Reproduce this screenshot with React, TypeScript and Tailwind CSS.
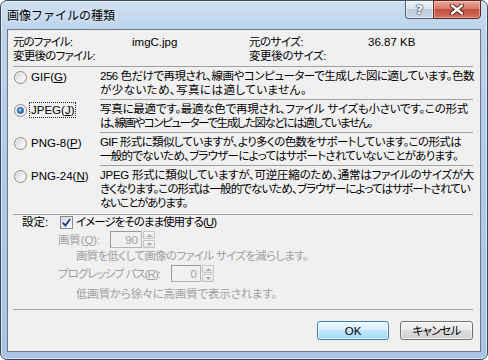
import React, { useLayoutEffect, useRef, useState } from "react";

const F = "font-['Liberation_Sans','Noto_Sans_CJK_JP',sans-serif]";

function Fit({ w, children, className = "" }: { w: number; children: React.ReactNode; className?: string }) {
  const ref = useRef<HTMLSpanElement>(null);
  const [ls, setLs] = useState<number | null>(null);
  useLayoutEffect(() => {
    const measure = () => {
      const el = ref.current;
      if (!el) return;
      const n = (el.textContent || "").length || 1;
      const cur = parseFloat(getComputedStyle(el).letterSpacing) || 0;
      const natural = el.getBoundingClientRect().width - n * cur;
      const next = Math.round(((w - natural) / n) * 1000) / 1000;
      setLs(next);
    };
    measure();
    if (document.fonts && document.fonts.ready) {
      document.fonts.ready.then(measure);
    }
  }, [w]);
  return (
    <span
      ref={ref}
      className={"inline-block whitespace-nowrap " + className}
      style={ls !== null ? { letterSpacing: `${ls}px` } : undefined}
    >
      {children}
    </span>
  );
}

function Radio({ checked }: { checked?: boolean }) {
  return (
    <span className="w-[13px] h-[13px] rounded-full border border-[#8b8b8b] bg-gradient-to-br from-[#cfcfcf] via-[#ececec] to-[#ffffff] flex items-center justify-center shrink-0 shadow-[inset_0_0_0_1px_#f4f4f4]">
      {checked && (
        <span className="w-[7px] h-[7px] rounded-full bg-[radial-gradient(circle_at_40%_35%,#bfe6ff_0%,#3f8fd8_45%,#0d4a95_100%)] border border-[#1b4f8a]" />
      )}
    </span>
  );
}

function Spinner() {
  return (
    <div className="flex flex-col w-[12px] h-[17px] gap-px">
      <div className="flex-1 border border-[#c4c4c4] rounded-[1px] bg-gradient-to-b from-[#f6f6f6] to-[#e4e4e4] flex items-center justify-center">
        <svg width="5" height="3" viewBox="0 0 5 3"><path d="M0 3 L2.5 0 L5 3 Z" fill="#a8a8a8" /></svg>
      </div>
      <div className="flex-1 border border-[#c4c4c4] rounded-[1px] bg-gradient-to-b from-[#f6f6f6] to-[#e4e4e4] flex items-center justify-center">
        <svg width="5" height="3" viewBox="0 0 5 3"><path d="M0 0 L2.5 3 L5 0 Z" fill="#a8a8a8" /></svg>
      </div>
    </div>
  );
}

function Option({
  label,
  lines,
  checked,
  focus,
  last,
}: {
  label: React.ReactNode;
  lines: [string, number][];
  checked?: boolean;
  focus?: boolean;
  last?: boolean;
}) {
  return (
    <div className="flex">
      <div className="w-[87px] shrink-0 pt-[2px] flex items-start">
        <div className="flex items-center h-[16px] gap-[3px] pl-[1px]">
          <Radio checked={checked} />
          <span
            className={
              "leading-[14px] whitespace-nowrap " +
              (focus ? "border border-dotted border-[#222] px-px -ml-px" : "px-px")
            }
          >
            {label}
          </span>
        </div>
      </div>
      <div
        className={
          "flex-1 min-w-0 pt-[2px] pb-[2px] " + (last ? "" : "border-b border-[#a0a0a0]")
        }
      >
        {lines.map(([t, w], i) => (
          <div key={i} className="leading-[14px] h-[14px] whitespace-nowrap">
            <Fit w={w}>{t}</Fit>
          </div>
        ))}
      </div>
    </div>
  );
}

export default function App() {
  return (
    <div className={"w-[488px] h-[360px] bg-white text-[11.5px] text-black " + F}>
      <div className="w-[488px] h-[360px] rounded-[7px] border border-[#3b4859] bg-[linear-gradient(180deg,#cfe0f2_0%,#bcd3ec_8%,#b2cbe7_40%,#a9c4e3_100%)] flex flex-col shadow-[inset_0_0_0_1px_rgba(255,255,255,0.55)]">
        {/* title bar */}
        <div className="h-[28px] flex justify-between">
          <div className="pl-[6px] pt-[7px] leading-[14px] text-[12px] text-black whitespace-nowrap font-['Noto_Sans_CJK_JP',sans-serif] [text-shadow:0_0_6px_rgba(255,255,255,0.9)]">
            画像ファイルの種類
          </div>
          <div className="flex mr-[6px] -mt-px h-[19px]">
            <div className="w-[28px] h-full border border-[#4f5d6e] border-r-0 rounded-bl-[4px] bg-[linear-gradient(180deg,#eef3f9_0%,#d9e3ef_45%,#bccadb_50%,#c9d6e6_100%)] flex items-center justify-center shadow-[inset_0_0_0_1px_rgba(255,255,255,0.6)]">
              <span className="font-['DejaVu_Sans',sans-serif] font-bold text-[13px] leading-[13px] text-white [text-shadow:0_0_1px_#2c3a4a,0_0_1px_#2c3a4a,0_0_2px_#2c3a4a]">
                ?
              </span>
            </div>
            <div className="w-[48px] h-full border border-[#5b2520] rounded-br-[4px] bg-[linear-gradient(180deg,#e9a99b_0%,#d9786a_45%,#c44f3e_50%,#d0705a_100%)] flex items-center justify-center shadow-[inset_0_0_0_1px_rgba(255,220,210,0.5)]">
              <svg width="16" height="11" viewBox="0 0 16 11">
                <path d="M3 1.5 L13 9.5 M13 1.5 L3 9.5" stroke="#4a1a14" strokeWidth="4.2" strokeLinecap="round" />
                <path d="M3 1.5 L13 9.5 M13 1.5 L3 9.5" stroke="#ffffff" strokeWidth="2.4" strokeLinecap="round" />
              </svg>
            </div>
          </div>
        </div>

        {/* client area */}
        <div className="ml-[6px] w-[474px] h-[323px] border border-[#6a7888] bg-[#f0f0f0] [font-feature-settings:'palt'] flex flex-col pl-[5px] pr-[7px]">
          {/* info */}
          <div className="pt-[5px] grid grid-cols-[119px_117px_119px_1fr] leading-[14px] whitespace-nowrap">
            <div><Fit w={59}>元のファイル:</Fit></div>
            <div>imgC.jpg</div>
            <div><Fit w={54}>元のサイズ:</Fit></div>
            <div>36.87 KB</div>
            <div><Fit w={82}>変更後のファイル:</Fit></div>
            <div></div>
            <div><Fit w={77}>変更後のサイズ:</Fit></div>
            <div></div>
          </div>
          <div className="mt-[3px] border-t border-[#a0a0a0]" />

          <Option
            label={<>GIF(<span className="underline">G</span>)</>}
            lines={[
              ["256 色だけで再現され、線画やコンピューターで生成した図に適しています。色数", 374],
              ["が少ないため、写真には適していません。", 207],
            ]}
          />
          <Option
            checked
            focus
            label={<>JPEG(<span className="underline">J</span>)</>}
            lines={[
              ["写真に最適です。最適な色で再現され、ファイル サイズも小さいです。この形式", 368],
              ["は、線画やコンピューターで生成した図などには適していません。", 272],
            ]}
          />
          <Option
            label={<>PNG-8(<span className="underline">P</span>)</>}
            lines={[
              ["GIF 形式に類似していますが、より多くの色数をサポートしています。この形式は", 361],
              ["一般的でないため、ブラウザーによってはサポートされていないことがあります。", 358],
            ]}
          />
          <Option
            last
            label={<>PNG-24(<span className="underline">N</span>)</>}
            lines={[
              ["JPEG 形式に類似していますが、可逆圧縮のため、通常はファイルのサイズが大", 374],
              ["きくなります。この形式は一般的でないため、ブラウザーによってはサポートされてい", 370],
              ["ないことがあります。", 87],
            ]}
          />
          <div className="mt-[2px] border-t border-[#a0a0a0]" />

          {/* settings */}
          <div className="flex items-center h-[14px] leading-[14px] whitespace-nowrap">
            <div className="ml-[9px] w-[38px]">設定:</div>
            <span className="w-[13px] h-[13px] border border-[#8b8b8b] bg-gradient-to-br from-[#d8d8d8] to-[#fbfbfb] flex items-center justify-center shrink-0">
              <svg width="9" height="9" viewBox="0 0 9 9">
                <path d="M0.8 4.6 L3.4 7.6 L8.2 0.9" fill="none" stroke="#1f3e88" strokeWidth="1.8" />
              </svg>
            </span>
            <span className="ml-[3px]">
              <Fit w={140}>
                イメージをそのまま使用する(<span className="underline">U</span>)
              </Fit>
            </span>
          </div>

          <div className="mt-[2px] flex items-center h-[17px] text-[#a0a0a0] whitespace-nowrap leading-[14px]">
            <div className="ml-[45px] w-[52px]">
              <Fit w={42}>
                画質(<span className="underline">Q</span>):
              </Fit>
            </div>
            <div className="w-[32px] h-[17px] border border-[#b5b5b5] border-t-[#9a9a9a] border-l-[#9a9a9a] bg-[#f0f0f0] flex items-center justify-end pr-[3px]">
              90
            </div>
            <div className="ml-px">
              <Spinner />
            </div>
          </div>

          <div className="mt-[1px] h-[14px] leading-[14px] pl-[63px] text-[#a0a0a0] whitespace-nowrap">
            <Fit w={232}>画質を低くして画像のファイル サイズを減らします。</Fit>
          </div>

          <div className="mt-[2px] flex items-center h-[17px] text-[#a0a0a0] whitespace-nowrap leading-[14px]">
            <div className="ml-[45px] w-[113px]">
              <Fit w={102}>
                プログレッシブ パス(<span className="underline">R</span>):
              </Fit>
            </div>
            <div className="w-[30px] h-[17px] border border-[#b5b5b5] border-t-[#9a9a9a] border-l-[#9a9a9a] bg-[#f0f0f0] flex items-center justify-end pr-[3px]">
              0
            </div>
            <div className="ml-px">
              <Spinner />
            </div>
          </div>

          <div className="mt-[5px] h-[14px] leading-[14px] pl-[63px] text-[#a0a0a0] whitespace-nowrap">
            <Fit w={201}>低画質から徐々に高画質で表示されます。</Fit>
          </div>

          <div className="mt-[8px] border-t border-[#a0a0a0]" />

          <div className="mt-[11px] flex justify-end gap-[11px]">
            <div className="w-[72px] h-[19px] rounded-[3px] border border-[#3c7fb1] bg-[linear-gradient(180deg,#eaf6fd_0%,#d9f0fc_45%,#bee6fd_50%,#a7d9f5_100%)] flex items-center justify-center leading-[14px] shadow-[inset_0_0_0_1px_rgba(255,255,255,0.7)]">
              OK
            </div>
            <div className="w-[73px] h-[19px] rounded-[3px] border border-[#707070] bg-[linear-gradient(180deg,#f2f2f2_0%,#ebebeb_45%,#dddddd_50%,#cfcfcf_100%)] flex items-center justify-center leading-[14px] shadow-[inset_0_0_0_1px_rgba(255,255,255,0.7)]">
              <Fit w={48}>キャンセル</Fit>
            </div>
          </div>
        </div>
      </div>
    </div>
  );
}
